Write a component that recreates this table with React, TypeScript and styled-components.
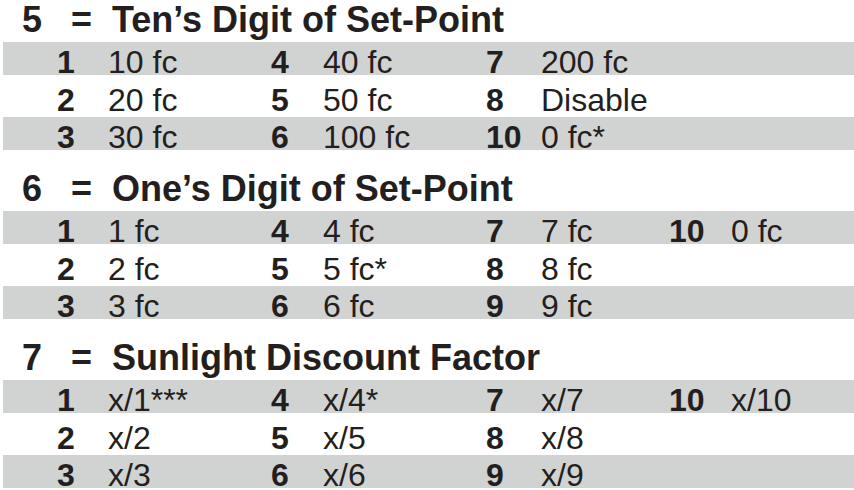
import React from "react";
import styled, { createGlobalStyle } from "styled-components";

const GlobalStyle = createGlobalStyle`
  html, body {
    margin: 0;
    padding: 0;
    background: #ffffff;
  }
  body {
    font-family: "Liberation Sans", Arial, Helvetica, sans-serif;
    color: #231f20;
  }
`;

const Page = styled.div`
  width: 854px;
  display: flex;
  flex-direction: column;
  gap: 19px;
`;

const Section = styled.section`
  display: flex;
  flex-direction: column;
`;

const Header = styled.h2`
  margin: 0;
  box-sizing: border-box;
  height: 42px;
  padding: 1px 0 0 22px;
  display: grid;
  grid-template-columns: 49px 41px 1fr;
  font-size: 36px;
  line-height: 38px;
  font-weight: 700;
  white-space: nowrap;
`;

const Rows = styled.div`
  display: flex;
  flex-direction: column;
  gap: 4.5px;
`;

const Row = styled.div<{ $shaded: boolean }>`
  box-sizing: border-box;
  height: 33px;
  margin-left: 3px;
  padding: 7px 0 0 54px;
  display: grid;
  grid-template-columns: 51px 163px 52px 163px 55px 128px 62px 1fr;
  font-size: 32px;
  line-height: 26px;
  white-space: nowrap;
  background: ${(p) => (p.$shaded ? "#d1d2d2" : "transparent")};
`;

const Num = styled.span`
  font-weight: 700;
`;

const Val = styled.span`
  font-weight: 400;
`;

type Cell = [number, string];

interface SectionData {
  key: number;
  title: string;
  rows: Cell[][];
}

const sections: SectionData[] = [
  {
    key: 5,
    title: "Ten\u2019s Digit of Set-Point",
    rows: [
      [[1, "10 fc"], [4, "40 fc"], [7, "200 fc"]],
      [[2, "20 fc"], [5, "50 fc"], [8, "Disable"]],
      [[3, "30 fc"], [6, "100 fc"], [10, "0 fc*"]],
    ],
  },
  {
    key: 6,
    title: "One\u2019s Digit of Set-Point",
    rows: [
      [[1, "1 fc"], [4, "4 fc"], [7, "7 fc"], [10, "0 fc"]],
      [[2, "2 fc"], [5, "5 fc*"], [8, "8 fc"]],
      [[3, "3 fc"], [6, "6 fc"], [9, "9 fc"]],
    ],
  },
  {
    key: 7,
    title: "Sunlight Discount Factor",
    rows: [
      [[1, "x/1***"], [4, "x/4*"], [7, "x/7"], [10, "x/10"]],
      [[2, "x/2"], [5, "x/5"], [8, "x/8"]],
      [[3, "x/3"], [6, "x/6"], [9, "x/9"]],
    ],
  },
];

export default function App() {
  return (
    <>
      <GlobalStyle />
      <Page>
        {sections.map((s) => (
          <Section key={s.key}>
            <Header>
              <span>{s.key}</span>
              <span>=</span>
              <span>{s.title}</span>
            </Header>
            <Rows>
              {s.rows.map((row, i) => (
                <Row key={i} $shaded={i % 2 === 0}>
                  {row.map(([n, v]) => (
                    <React.Fragment key={n}>
                      <Num>{n}</Num>
                      <Val>{v}</Val>
                    </React.Fragment>
                  ))}
                </Row>
              ))}
            </Rows>
          </Section>
        ))}
      </Page>
    </>
  );
}
